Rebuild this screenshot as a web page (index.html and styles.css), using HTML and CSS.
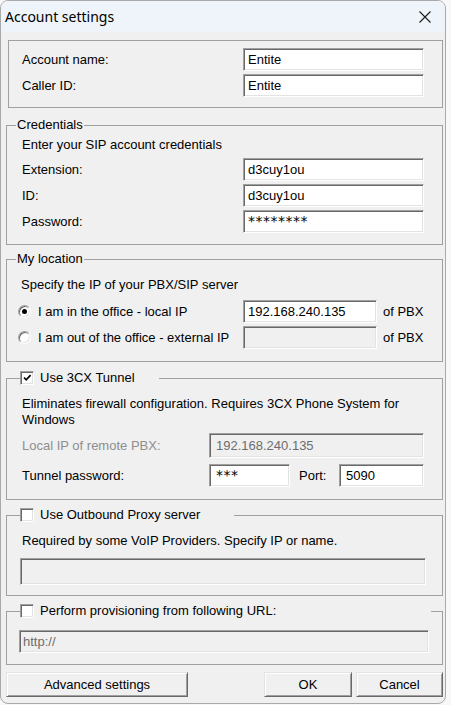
FILE: index.html
```html
<!DOCTYPE html>
<html lang="en">
<head>
<meta charset="utf-8">
<title>Account settings</title>
<link rel="stylesheet" href="styles.css">
</head>
<body>
<div class="window">
  <div class="titlebar">
    <span class="title">Account settings</span>
    <svg class="close" width="12" height="12" viewBox="0 0 12 12"><path d="M0.5 0.5 L11.5 11.5 M11.5 0.5 L0.5 11.5" stroke="#1c1c1c" stroke-width="1.1" fill="none"/></svg>
  </div>

  <fieldset class="group group-account">
    <div class="rows">
      <span class="label">Account name:</span><div class="field">Entite</div>
      <span class="label">Caller ID:</span><div class="field">Entite</div>
    </div>
  </fieldset>

  <fieldset class="group group-cred">
    <legend class="text-legend">Credentials</legend>
    <div class="desc">Enter your SIP account credentials</div>
    <div class="rows">
      <span class="label">Extension:</span><div class="field">d3cuy1ou</div>
      <span class="label">ID:</span><div class="field">d3cuy1ou</div>
      <span class="label">Password:</span><div class="field secret">********</div>
    </div>
  </fieldset>

  <fieldset class="group group-loc">
    <legend class="text-legend">My location</legend>
    <div class="desc">Specify the IP of your PBX/SIP server</div>
    <div class="loc-rows">
      <div class="option"><span class="radio checked"></span><span>I am in the office - local IP</span></div>
      <div class="field">192.168.240.135</div>
      <span class="suffix">of PBX</span>
      <div class="option"><span class="radio"></span><span>I am out of the office - external IP</span></div>
      <div class="field disabled"></div>
      <span class="suffix">of PBX</span>
    </div>
  </fieldset>

  <fieldset class="group group-tunnel">
    <legend class="check-legend"><span class="checkbox"><svg width="12" height="12" viewBox="0 0 12 12"><path d="M3 5.5 L5.2 7.8 L9.6 3.2" stroke="#000" stroke-width="1.7" fill="none"/></svg></span><span>Use 3CX Tunnel</span></legend>
    <div class="desc tunnel-desc">Eliminates firewall configuration. Requires 3CX Phone System for Windows</div>
    <div class="remote-row">
      <span class="label muted">Local IP of remote PBX:</span>
      <div class="field disabled tall">192.168.240.135</div>
    </div>
    <div class="pass-row">
      <span class="label pass-label">Tunnel password:</span>
      <div class="field pass-field secret">***</div>
      <span class="label port-label">Port:</span>
      <div class="field port-field">5090</div>
    </div>
  </fieldset>

  <fieldset class="group group-proxy">
    <legend class="check-legend"><span class="checkbox"></span><span>Use Outbound Proxy server</span></legend>
    <div class="desc">Required by some VoIP Providers. Specify IP or name.</div>
    <div class="field disabled proxy-field"></div>
  </fieldset>

  <fieldset class="group group-prov">
    <legend class="check-legend"><span class="checkbox"></span><span>Perform provisioning from following URL:</span></legend>
    <div class="field disabled url-field">http://</div>
  </fieldset>

  <div class="buttons">
    <div class="button advanced">Advanced settings</div>
    <div class="button ok">OK</div>
    <div class="button cancel">Cancel</div>
  </div>
</div>
</body>
</html>
```

FILE: styles.css
```css
* { box-sizing: border-box; }

html, body {
  margin: 0;
  padding: 0;
}

body {
  width: 451px;
  height: 705px;
  overflow: hidden;
  background: #f8f8f8;
  font-family: "Liberation Sans", Arial, sans-serif;
  font-size: 13px;
  line-height: 16px;
  color: #000;
}

.window {
  width: 446px;
  height: 704px;
  border: 1px solid #a9a9a9;
  border-radius: 8px;
  background: #f0f0f0;
  display: flex;
  flex-direction: column;
  overflow: hidden;
}

.titlebar {
  flex: none;
  height: 31px;
  background: #eef4f9;
  display: flex;
  align-items: center;
  justify-content: space-between;
  padding: 0 14px 0 4px;
}

.title {
  font-family: "Noto Sans", "Open Sans", sans-serif;
  font-size: 14px;
  line-height: 20px;
  color: #000;
}

.close { display: block; }

.group {
  margin: 0 2px 0 5px;
  border: 1px solid #a0a0a0;
  min-inline-size: 0;
  flex: none;
}

.text-legend {
  padding: 0 1px;
  line-height: 16px;
  height: 16px;
}

.check-legend {
  padding: 0;
  height: 16px;
  display: flex;
  align-items: center;
  gap: 6px;
}

.rows {
  display: grid;
  grid-template-columns: 1fr 181px;
  grid-auto-rows: 23px;
  row-gap: 3px;
  align-items: center;
}

.label { white-space: nowrap; }

.muted { color: #8e8e8e; }

.field {
  height: 23px;
  background: #fff;
  border: 1px solid;
  border-color: #a0a0a0 #ffffff #ffffff #a0a0a0;
  box-shadow: inset 1px 1px 0 #696969, inset -1px -1px 0 #e3e3e3;
  padding: 0 4px;
  line-height: 21px;
  white-space: nowrap;
  overflow: hidden;
}

.field.secret {
  font-family: "DejaVu Sans", sans-serif;
  font-size: 14px;
  letter-spacing: 0.5px;
}

.field.disabled {
  background: #f0f0f0;
  color: #6d6d6d;
}

.field.tall {
  height: 25px;
  line-height: 23px;
  padding-left: 6px;
}

/* group 1 */
.group-account {
  margin-top: 8px;
  margin-left: 7px;
  padding: 7px 18px 10px 13px;
}

/* group 2 */
.group-cred {
  margin-top: 9px;
  padding: 4px 18px 11px 15px;
}
.group-cred .text-legend { margin-left: -6px; }
.group-cred .desc { margin-bottom: 5px; }

/* group 3 */
.group-loc {
  margin-top: 6px;
  padding: 10px 0 12px 11px;
}
.group-loc .text-legend { margin-left: -2px; }
.group-loc .desc {
  margin-left: 3px;
  margin-bottom: 7px;
}

.loc-rows {
  display: grid;
  grid-template-columns: 225px 134px auto;
  grid-auto-rows: 23px;
  row-gap: 3px;
  align-items: center;
}

.option {
  display: flex;
  align-items: center;
  gap: 7px;
  white-space: nowrap;
}

.radio {
  width: 13px;
  height: 13px;
  border-radius: 50%;
  border: 1px solid;
  border-color: #a0a0a0 #ffffff #ffffff #a0a0a0;
  box-shadow: inset 1px 1px 0 #696969, inset -1px -1px 0 #e3e3e3;
  background: #fff;
  display: flex;
  align-items: center;
  justify-content: center;
  flex: none;
}

.radio.checked::after {
  content: "";
  width: 5px;
  height: 5px;
  border-radius: 50%;
  background: #000;
}

.suffix {
  margin-left: 6px;
  white-space: nowrap;
}

/* group 4 */
.group-tunnel {
  margin-top: 8px;
  padding: 10px 18px 12px 15px;
}
.group-tunnel .check-legend {
  margin-left: -2px;
  width: 139px;
}

.tunnel-desc { margin-bottom: 5px; }

.checkbox {
  width: 14px;
  height: 14px;
  flex: none;
  background: #fff;
  border: 1px solid;
  border-color: #a0a0a0 #ffffff #ffffff #a0a0a0;
  box-shadow: inset 1px 1px 0 #696969, inset -1px -1px 0 #e3e3e3;
  display: flex;
  align-items: center;
  justify-content: center;
}

.checkbox svg { display: block; }

.remote-row {
  display: grid;
  grid-template-columns: 187px 215px;
  align-items: center;
  margin-bottom: 6px;
}

.pass-row {
  display: flex;
  align-items: center;
  height: 23px;
}

.pass-label { width: 187px; flex: none; }
.pass-field { width: 81px; flex: none; padding-left: 6px; }
.port-label { width: 40px; margin-left: 9px; flex: none; }
.port-field { width: 85px; flex: none; padding-left: 6px; }

/* group 5 */
.group-proxy {
  margin-top: 7px;
  padding: 10px 16px 10px 13px;
}
.group-proxy .check-legend { width: 214px; }
.group-proxy .desc {
  margin-left: 2px;
  margin-bottom: 9px;
}
.proxy-field { height: 27px; }

/* group 6 */
.group-prov {
  margin-top: 7px;
  padding: 11px 13px 11px 12px;
}
.group-prov .check-legend {
  margin-left: 1px;
  width: 411px;
}
.url-field { padding-left: 3px; }

/* buttons */
.buttons {
  flex: none;
  display: flex;
  margin: 7px 2px 0 5px;
  height: 25px;
}

.button {
  height: 25px;
  background: #f0f0f0;
  border: 1px solid;
  border-color: #e3e3e3 #696969 #696969 #e3e3e3;
  box-shadow: inset 1px 1px 0 #ffffff, inset -1px -1px 0 #a0a0a0;
  display: flex;
  align-items: center;
  justify-content: center;
  white-space: nowrap;
}

.advanced { width: 182px; }
.ok { width: 88px; margin-left: auto; }
.cancel { width: 87px; margin-left: 4px; }
```
